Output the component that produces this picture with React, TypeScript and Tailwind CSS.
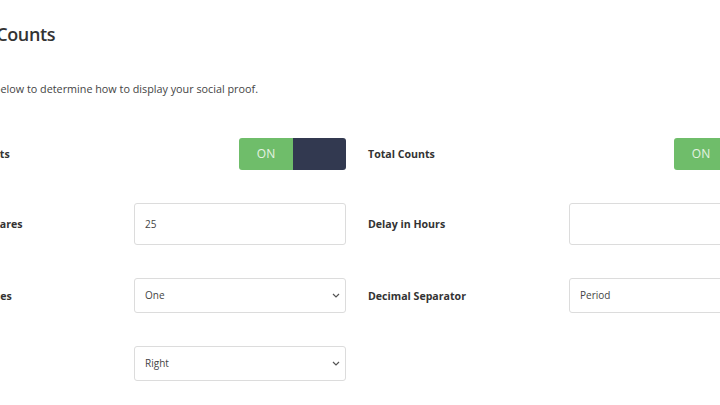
import React from "react";

const font = { fontFamily: '"Open Sans", "Noto Sans", sans-serif' };

function Chevron() {
  return (
    <svg width="8" height="5" viewBox="0 0 8 5" className="text-[#555]">
      <path d="M1 1l3 3 3-3" fill="none" stroke="currentColor" strokeWidth="1.2" />
    </svg>
  );
}

function Toggle() {
  return (
    <div className="flex h-[32px] w-[107px] overflow-hidden rounded-[3px]">
      <div className="flex w-[54px] items-center justify-center bg-[#6fbd6a] text-[12px] text-[#e6f3e3]">ON</div>
      <div className="flex-1 bg-[#323950]" />
    </div>
  );
}

function TextInput({ value }: { value?: string }) {
  return (
    <div className="flex h-[42px] w-[212px] items-center rounded-[3px] border border-[#dcdcdc] bg-white px-[10px] text-[10px] text-[#444]">
      {value}
    </div>
  );
}

function Select({ value }: { value: string }) {
  return (
    <div className="flex h-[35px] w-[212px] items-center justify-between rounded-[3px] border border-[#dcdcdc] bg-white pl-[10px] pr-[5px] text-[10px] text-[#444]">
      <span>{value}</span>
      <Chevron />
    </div>
  );
}

function Row({ label, children }: { label?: string; children: React.ReactNode }) {
  return (
    <div className="flex items-center">
      <div className="w-[201px] pt-[2px] text-[10.6px] font-bold text-[#333]">{label}</div>
      <div className="flex w-[212px] justify-end">{children}</div>
    </div>
  );
}

export default function App() {
  return (
    <div className="relative h-[405px] w-[720px] overflow-hidden bg-white" style={font}>
      <div className="ml-[-67px] w-[900px]">
        <div className="ml-[-150px] w-[272px] pt-[22px] text-right">
          <h1 className="whitespace-nowrap text-[18px] font-semibold leading-[24px] tracking-[-0.4px] text-[#333]">Share Counts</h1>
        </div>
        <div className="mt-[35px] ml-[-150px] w-[475px] text-right">
          <p className="whitespace-nowrap text-[10.8px] leading-[16px] text-[#444]">
            Use the options below to determine how to display your social proof.
          </p>
        </div>
        <div className="mt-[41px] flex gap-[22px]">
          <div className="flex flex-col gap-[33px]">
            <Row label="Button Counts"><Toggle /></Row>
            <Row label="Minimum Shares"><TextInput value="25" /></Row>
            <Row label="Decimal Places"><Select value="One" /></Row>
            <Row label="Alignment"><Select value="Right" /></Row>
          </div>
          <div className="flex flex-col gap-[33px]">
            <Row label="Total Counts"><Toggle /></Row>
            <Row label="Delay in Hours"><TextInput /></Row>
            <Row label="Decimal Separator"><Select value="Period" /></Row>
          </div>
        </div>
      </div>
    </div>
  );
}
